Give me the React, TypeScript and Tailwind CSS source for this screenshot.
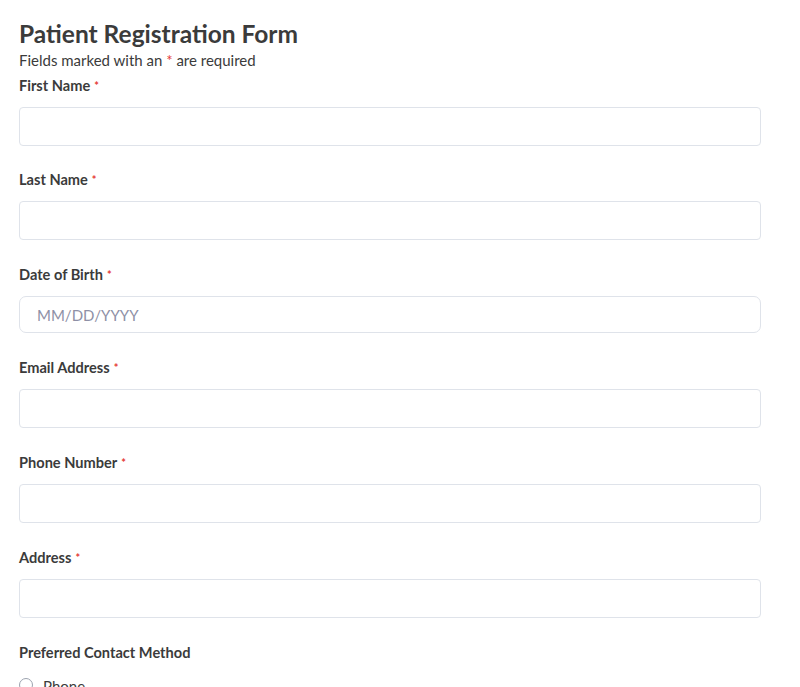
import React from 'react'

const fields = [
  { id: 'firstName', label: 'First Name', gap: 'mb-[24px]' },
  { id: 'lastName', label: 'Last Name', gap: 'mb-[25px]' },
  { id: 'dob', label: 'Date of Birth', placeholder: 'MM/DD/YYYY', gap: 'mb-[25px]' },
  { id: 'email', label: 'Email Address', gap: 'mb-[25px]' },
  { id: 'phone', label: 'Phone Number', gap: 'mb-[25px]' },
  { id: 'address', label: 'Address', gap: 'mb-[25px]' },
]

function Required() {
  return <span className="ml-[4px] text-[11px] align-top text-[#e53935]">*</span>
}

export default function App() {
  return (
    <div className="min-h-screen bg-white font-['Lato',sans-serif] text-[#3b3b3b]">
      <form className="px-[19px] pt-[20px] w-[780px]">
        <h1 className="text-[24.5px] leading-[28px] font-bold">Patient Registration Form</h1>
        <p className="text-[15px] leading-[20px] mt-[2px]">
          Fields marked with an <span className="text-[#e53935]">*</span> are required
        </p>
        {fields.map((f, i) => (
          <div key={f.id} className={(i === 0 ? 'mt-[6px] ' : '') + f.gap}>
            <label htmlFor={f.id} className="block text-[14.6px] leading-[20px] font-bold mb-[11px]">
              {f.label}
              <Required />
            </label>
            <input
              id={f.id}
              type="text"
              placeholder={f.placeholder}
              className={
                'block w-full px-[17px] text-[15px] border border-[#dfe3ea] bg-white placeholder:text-[#8e90a6] outline-none ' +
                (f.placeholder ? 'rounded-[7px] h-[37px]' : 'rounded-[4px] h-[39px]')
              }
            />
          </div>
        ))}
        <div>
          <p className="text-[14.6px] leading-[20px] font-bold mb-[11px]">Preferred Contact Method</p>
          <label className="flex items-start gap-[10px] text-[15px] leading-[20px]">
            <span className="mt-[4px] w-[14px] h-[14px] rounded-full border border-[#9ca3af] bg-white shrink-0" />
            <span className="pt-[2px]">Phone</span>
          </label>
        </div>
      </form>
    </div>
  )
}
